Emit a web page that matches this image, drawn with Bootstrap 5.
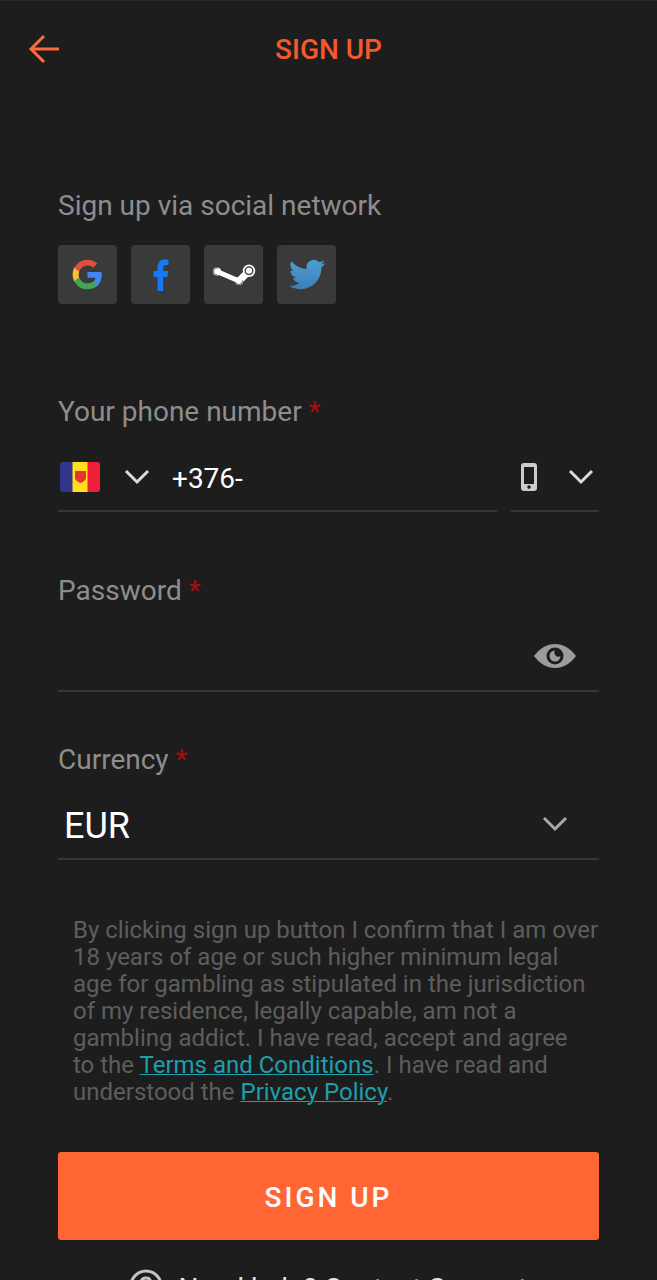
<!DOCTYPE html>
<html lang="en" data-bs-theme="dark">
<head>
<meta charset="utf-8">
<meta name="viewport" content="width=device-width, initial-scale=1">
<title>Sign up</title>
<link href="https://cdn.jsdelivr.net/npm/bootstrap@5.3.0/dist/css/bootstrap.min.css" rel="stylesheet">
<style>
  body { background: #1d1d1d; color: #fff; font-family: Roboto, "Liberation Sans", sans-serif; overflow-x: hidden; }
  svg { display: block; flex: none; }
  .topbar { display: grid; grid-template-columns: 60px 1fr 60px; height: 98px; border-top: 1px solid #282828; }
  .topbar h1 { font-size: 28px; line-height: 36px; font-weight: 500; color: #f4592c; }
  .sheet { padding: 0 58px; }
  .field-label { font-size: 28px; line-height: 34px; color: #8d8d8d; display: block; }
  .req { color: #a80d0d; }
  .block-social { padding-top: 91px; }
  .block-phone { padding-top: 91px; }
  .block-pass { padding-top: 62px; }
  .block-cur { padding-top: 51px; }
  .tile { width: 59px; height: 59px; border-radius: 4px; background: #3a3a3a; border: 0; }
  .tiles { gap: 14px; padding-top: 22px; }
  .bare, .bare:focus { background-color: transparent; border: 0; border-radius: 0; color: #fff; box-shadow: none; padding: 0; }
  .line, .line:hover, .line:focus { border: 0; border-bottom: 2px solid #373737; }
  .phone-row { gap: 14px; padding-top: 14px; }
  .phone-row .line { height: 69px; }
  .country { gap: 24px; padding: 0 22px 0 2px; }
  .tel { font-size: 28px; line-height: 36px; }
  .kind { flex: 0 0 88px; padding: 0 5px 0 9px; }
  .pass-row { height: 84px; padding: 14px 23px 0 0; }
  .cur-row { height: 83px; padding-top: 16px; }
  .cur { font-size: 36px; line-height: 44px; height: 44px; padding: 0 50px 0 6px; background-position: right 31px top 12px; background-size: 26px 16px;
    background-image: url("data:image/svg+xml,%3Csvg xmlns='http://www.w3.org/2000/svg' viewBox='0 0 26 16'%3E%3Cpath d='M2 2l11 11L24 2' fill='none' stroke='%23a8a8a8' stroke-width='3'/%3E%3C/svg%3E"); }
  .cur:focus { background-color: transparent; }
  .legal { font-size: 24px; line-height: 27px; color: #5d5d5d; padding: 57px 0 0 15px; }
  .legal a { color: #1f9fae; text-decoration-thickness: 1px; }
  .cta { height: 88px; border-radius: 3px; background: #ff6634; border: 0; color: #fff; font-size: 28px; line-height: 34px; font-weight: 500; letter-spacing: 3px; margin-top: 46px; padding: 3px 0 0; }
  .cta:hover { background: #f15a29; color: #fff; }
  .help { gap: 15px; font-size: 28px; line-height: 40px; color: #e4e4e4; padding: 29px 0; }
</style>
</head>
<body>
<header class="topbar align-items-center">
  <a href="#" aria-label="Back" class="d-flex justify-content-end">
    <svg width="32" height="32" viewBox="0 0 32 32" fill="none" stroke="#fb6c3c" stroke-width="3"><path d="M31 15H4M16 2L3 15l13 13"/></svg>
  </a>
  <h1 class="text-center m-0">SIGN UP</h1>
</header>

<main class="sheet">
  <section class="block-social">
    <h2 class="field-label fw-normal m-0">Sign up via social network</h2>
    <div class="tiles d-flex">
      <button type="button" class="tile btn p-0 d-flex align-items-center justify-content-center" aria-label="Google">
        <svg width="31" height="31" viewBox="0 0 48 48"><path fill="#4285f4" d="M46.1 24.5c0-1.6-.1-3.100-.4-4.500H24v9h12.400c-.5 2.900-2.200 5.300-4.600 6.900v5.800h7.500c4.300-4 6.800-9.900 6.800-17.200z"/><path fill="#3fa653" d="M24 47c6.200 0 11.400-2.100 15.300-5.600l-7.500-5.800c-2 1.400-4.700 2.200-7.800 2.200-6 0-11.100-4-12.900-9.500H3.400v6C7.200 41.800 15 47 24 47z"/><path fill="#fbbc3c" d="M11.100 28.300c-.5-1.400-.7-2.800-.7-4.300s.2-3 .7-4.300v-6H3.400C1.900 16.800 1 20.300 1 24s.9 7.200 2.400 10.300z"/><path fill="#dd4f3e" d="M24 10.200c3.400 0 6.400 1.200 8.800 3.400l6.600-6.600C35.400 3.200 30.200 1 24 1 15 1 7.200 6.200 3.400 13.700l7.700 6C12.900 14.200 18 10.200 24 10.200z"/></svg>
      </button>
      <button type="button" class="tile btn p-0 d-flex align-items-center justify-content-center" aria-label="Facebook">
        <svg width="18" height="32" viewBox="0 0 16 32"><path fill="#1877f2" d="M4.600 32V18H.5v-6h4.100V8.200C4.600 3 7.400.4 11.600.4c1.500 0 2.700.1 3.900.3v5.200h-2.400c-2.200 0-2.900 1.100-2.900 2.700V12h5.100l-.9 6h-4.200v14z"/></svg>
      </button>
      <button type="button" class="tile btn p-0 d-flex align-items-center justify-content-center" aria-label="Steam">
        <svg width="44" height="22" viewBox="0 0 44 22"><path d="M5 7.500L27 17" fill="none" stroke="#fff" stroke-width="5"/><path d="M27 17L37 7" fill="none" stroke="#fff" stroke-width="7"/><circle cx="5" cy="7.500" r="4" fill="#fff"/><circle cx="27" cy="17" r="4" fill="#fff"/><circle cx="37" cy="6.800" r="6.200" fill="#fff"/><circle cx="37" cy="6.800" r="3.800" fill="#fff" stroke="#4c4c4c" stroke-width="1.500"/><path d="M6.500 4a3.600 3.600 0 1 0-1.500 7M23.500 18a3.600 3.600 0 0 0 7-1.500" fill="none" stroke="#666" stroke-width="1"/></svg>
      </button>
      <button type="button" class="tile btn p-0 d-flex align-items-center justify-content-center" aria-label="Twitter">
        <svg width="36" height="31" viewBox="0 0 24 20"><defs><linearGradient id="tw" x1="0" y1="0" x2="0" y2="1"><stop offset="0" stop-color="#4f9fd2"/><stop offset="1" stop-color="#3a80b8"/></linearGradient></defs><path fill="url(#tw)" d="M23.950 2.570a10 10 0 0 1-2.820.77 4.960 4.960 0 0 0 2.160-2.720c-.95.550-2.010.960-3.130 1.180a4.920 4.920 0 0 0-8.380 4.480C7.690 6.090 4.070 4.130 1.640 1.160a4.820 4.820 0 0 0-.67 2.480c0 1.710.870 3.210 2.190 4.100a4.900 4.900 0 0 1-2.230-.620v.060a4.920 4.920 0 0 0 3.950 4.830 5 5 0 0 1-2.210.080 4.940 4.940 0 0 0 4.600 3.420A9.870 9.870 0 0 1 0 17.540a13.990 13.990 0 0 0 7.550 2.210c9.050 0 14-7.500 14-13.980 0-.210 0-.420-.020-.630a9.940 9.940 0 0 0 2.460-2.550z"/></svg>
      </button>
    </div>
  </section>

  <form onsubmit="return false">
    <div class="block-phone">
      <label class="field-label" for="tel">Your phone number <span class="req">*</span></label>
      <div class="phone-row d-flex">
        <div class="line d-flex align-items-center flex-fill">
          <button type="button" class="btn bare country d-flex align-items-center" aria-label="Country: Andorra">
            <svg width="40" height="30" viewBox="0 0 40 30"><clipPath id="fl"><rect width="40" height="30" rx="3"/></clipPath><g clip-path="url(#fl)"><path fill="#31358c" d="M0 0h13v30H0z"/><path fill="#ffe01b" d="M12.500 0H28v30H12.500z"/><path fill="#f02038" d="M27.500 0H40v30H27.500z"/><path fill="#e5352c" d="M15 9h11v6.500c0 3-3 4.500-5.500 5.500C18 20 15 18.500 15 15.500z"/></g></svg>
            <svg width="26" height="18" viewBox="0 0 26 18"><path d="M2 3l11 11L24 3" fill="none" stroke="#dcdcdc" stroke-width="3"/></svg>
          </button>
          <input id="tel" type="tel" class="form-control bare tel pt-1" value="+376-">
        </div>
        <button type="button" class="btn bare line kind d-flex align-items-center justify-content-between" aria-label="Number type: mobile">
          <svg width="20" height="30" viewBox="0 0 20 30"><path fill="#ccc" fill-rule="evenodd" d="M4 1h10a3 3 0 0 1 3 3v22a3 3 0 0 1-3 3H4a3 3 0 0 1-3-3V4a3 3 0 0 1 3-3zm0 4v17h10V5zm5 18.300a1.800 1.800 0 1 0 0 3.600 1.800 1.800 0 0 0 0-3.600z"/></svg>
          <svg width="26" height="18" viewBox="0 0 26 18"><path d="M2 3l11 11L24 3" fill="none" stroke="#dcdcdc" stroke-width="3"/></svg>
        </button>
      </div>
    </div>

    <div class="block-pass">
      <label class="field-label" for="pass">Password <span class="req">*</span></label>
      <div class="pass-row line d-flex align-items-center">
        <input id="pass" type="password" class="form-control bare tel">
        <button type="button" class="btn bare" aria-label="Show password">
          <svg width="42" height="26" viewBox="0 0 42 26"><path fill="#9c9c9c" d="M0 13C6 5 13 1 21 1s15 4 21 12c-6 8-13 12-21 12S6 21 0 13z"/><circle cx="21" cy="13" r="8.500" fill="#1d1d1d"/><path fill="#9c9c9c" d="M21 7.500a5.500 5.500 0 1 0 5.500 5.500A4 4 0 0 1 21 7.500z"/></svg>
        </button>
      </div>
    </div>

    <div class="block-cur">
      <label class="field-label" for="cur">Currency <span class="req">*</span></label>
      <div class="cur-row line d-flex align-items-center">
        <select id="cur" class="form-select bare cur"><option>EUR</option><option>USD</option></select>
      </div>
    </div>

    <p class="legal m-0">By clicking sign up button I confirm that I am over 18 years of age or such higher minimum legal age for gambling as stipulated in the jurisdiction of my residence, legally capable, am not a gambling addict. I have read, accept and agree to&nbsp;the <a href="#">Terms and Conditions</a>. I have read and understood the <a href="#">Privacy Policy</a>.</p>
    <button type="submit" class="btn cta w-100">SIGN UP</button>
  </form>
</main>

<footer class="help d-flex justify-content-center align-items-start">
  <svg width="34" height="34" viewBox="0 0 34 34" fill="none" stroke="#c4c4c4" stroke-width="3"><circle cx="17" cy="17" r="15"/><path d="M12 14a5 5 0 1 1 7.500 4.300c-1.700 1-2.500 1.700-2.500 3.700M17 24v3"/></svg>
  <span>Need help? Contact Support</span>
</footer>
<script src="https://cdn.jsdelivr.net/npm/bootstrap@5.3.0/dist/js/bootstrap.bundle.min.js"></script>
</body>
</html>
